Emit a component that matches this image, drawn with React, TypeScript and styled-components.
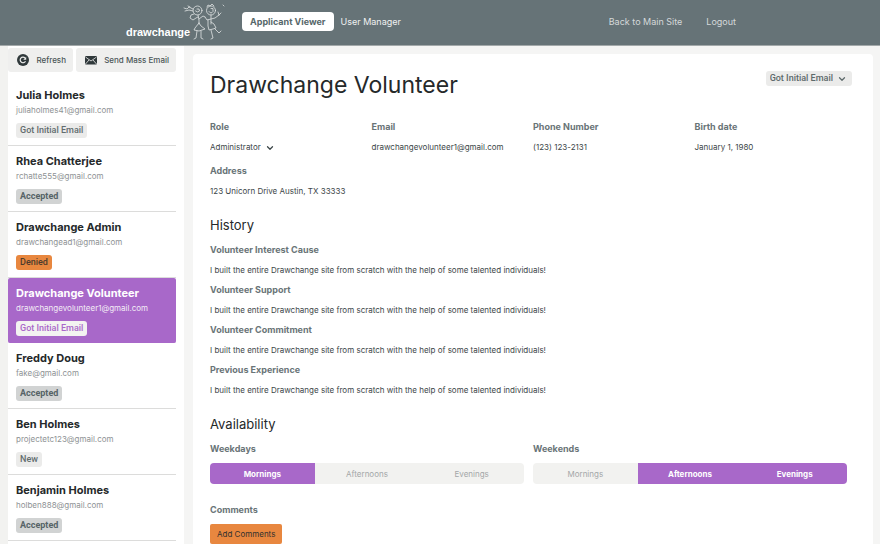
import React, { useState } from "react";
import styled, { createGlobalStyle } from "styled-components";
import { ChevronDown } from "lucide-react";

const color = {
  slate: "#667377",
  ink: "#25292a",
  text: "#3c4648",
  muted: "#8e9294",
  wash: "#f2f2f0",
  line: "#dcdcdb",
  purple: "#a868c9",
  orange: "#e8873f",
};

const tagFont = `Roboto, "Liberation Sans", sans-serif`;

const GlobalStyle = createGlobalStyle`
  * { box-sizing: border-box; }
  body {
    margin: 0;
    background: #f5f5f4;
    color: ${color.text};
    font: 8px/20px Inter, "Liberation Sans", sans-serif;
  }
  button, select { font: inherit; color: inherit; border: 0; margin: 0; cursor: pointer; }
  h1, h2, h3, p, ul, dl, dd { margin: 0; padding: 0; }
`;

const Page = styled.div`
  display: flex;
  flex-direction: column;
  height: 100vh;
`;

const Header = styled.header`
  flex: none;
  display: flex;
  align-items: center;
  height: 46px;
  padding: 0 144px 2px 126px;
  background: ${color.slate};
  border-bottom: 1px solid #a3a9aa;
  color: #fff;
  font-size: 9px;
`;

const Logo = styled.a`
  display: flex;
  align-items: flex-end;
  width: 100px;
  height: 38px;
  color: #fff;
  text-decoration: none;
  font: bold 11px/18px "Liberation Sans", sans-serif;
`;

const Figures = styled.svg`
  flex: none;
  width: 44px;
  height: 38px;
  margin-left: -7px;
  fill: none;
  stroke: #dfe3e3;
  stroke-width: 0.8;
  stroke-linecap: round;
  stroke-linejoin: round;
`;

const Tabs = styled.nav`
  display: flex;
  align-items: center;
  gap: 7px;
  margin-left: 16px;
`;

const Tab = styled.a<{ $active?: boolean }>`
  padding: 0 ${(p) => (p.$active ? 8 : 0)}px;
  border-radius: 4px;
  background: ${(p) => (p.$active ? "#fff" : "transparent")};
  color: ${(p) => (p.$active ? "#56676a" : "#f0f1f1")};
  font-weight: ${(p) => (p.$active ? 700 : 400)};
  line-height: 19px;
  text-decoration: none;
  white-space: nowrap;
`;

const SiteLinks = styled.nav`
  display: flex;
  gap: 24px;
  margin-left: auto;
`;

const SiteLink = styled.a`
  color: #d5d9da;
  text-decoration: none;
`;

const Body = styled.div`
  flex: 1;
  min-height: 0;
  display: flex;
`;

const Sidebar = styled.aside`
  flex: none;
  display: flex;
  flex-direction: column;
  width: 184px;
  padding: 2px 8px 0 0;
  border-left: 8px solid ${color.wash};
  background: #fff;
`;

const Actions = styled.div`
  display: flex;
  gap: 3px;
  padding-bottom: 8px;
`;

const ActionButton = styled.button<{ $grow?: boolean }>`
  flex: ${(p) => (p.$grow ? "1" : "none")};
  display: flex;
  align-items: center;
  justify-content: space-between;
  gap: 6px;
  width: ${(p) => (p.$grow ? "auto" : "65px")};
  height: 24px;
  padding: 0 7px 0 9px;
  border-radius: 3px;
  background: #efefee;
  color: #4b5557;
  font-weight: 500;
  white-space: nowrap;
`;

const ActionIcon = styled.svg`
  flex: none;
  width: 12px;
  height: 12px;
`;

const PeopleList = styled.ul`
  flex: 1;
  min-height: 0;
  display: flex;
  flex-direction: column;
  margin-bottom: 3px;
  list-style: none;
`;

const PersonItem = styled.li`
  flex: 1 0 auto;
  display: flex;
`;

const PersonButton = styled.button<{ $selected: boolean }>`
  flex: 1;
  display: flex;
  flex-direction: column;
  align-items: flex-start;
  padding: 7px 8px 6px;
  border-bottom: 1px solid ${(p) => (p.$selected ? color.purple : color.line)};
  border-radius: ${(p) => (p.$selected ? 2 : 0)}px;
  background: ${(p) => (p.$selected ? color.purple : "#fff")};
  color: ${(p) => (p.$selected ? "#f3ecf6" : color.muted)};
  line-height: 14px;
  text-align: left;
`;

const PersonName = styled.span<{ $selected: boolean }>`
  color: ${(p) => (p.$selected ? "#fff" : color.ink)};
  font-size: 11px;
  font-weight: 700;
  line-height: 16px;
`;

type Tone = "pale" | "grey" | "orange" | "light";

const tones: Record<Tone, string> = {
  pale: "#ebebea",
  grey: "#d1d3d3",
  orange: color.orange,
  light: "#f3f3f1",
};
const toneText: Record<Tone, string> = {
  pale: "#626d6f",
  grey: "#566467",
  orange: "#4d3b2c",
  light: "#a968c9",
};

const Badge = styled.span<{ $tone: Tone }>`
  margin-top: 6px;
  padding: 0 4px;
  border-radius: 3px;
  background: ${(p) => tones[p.$tone]};
  color: ${(p) => toneText[p.$tone]};
  font-family: ${tagFont};
  font-size: 9px;
  font-weight: ${(p) => (p.$tone === "grey" ? 700 : 500)};
  line-height: 15px;
`;

const Main = styled.main`
  flex: 1;
  min-width: 0;
  padding: 8px 7px 0 9px;
  overflow-y: auto;
  scrollbar-width: none;
`;

const Card = styled.article`
  min-height: 100%;
  padding: 17px 17px 16px;
  border-radius: 4px;
  background: #fff;
`;

const TitleRow = styled.div`
  display: flex;
  align-items: flex-start;
  justify-content: space-between;
  padding-right: 4px;
  margin-bottom: 18px;
`;

const Title = styled.h1`
  color: ${color.ink};
  font-size: 23px;
  font-weight: 400;
  line-height: 28px;
`;

const SelectBox = styled.span<{ $filled?: boolean }>`
  display: inline-grid;
  grid-template-columns: auto auto;
  align-items: center;
  border-radius: 3px;
  background: ${(p) => (p.$filled ? "#ebebea" : "transparent")};
  color: ${(p) => (p.$filled ? "#5d696b" : color.text)};
  font-family: ${(p) => (p.$filled ? tagFont : "inherit")};
  font-size: ${(p) => (p.$filled ? 9 : 8)}px;
  font-weight: ${(p) => (p.$filled ? 500 : 400)};
  line-height: 15px;
  vertical-align: middle;

  select {
    grid-area: 1 / 1 / 2 / 3;
    height: 15px;
    padding: 0 19px 0 ${(p) => (p.$filled ? 4 : 0)}px;
    appearance: none;
    background: transparent;
    field-sizing: content;
  }

  svg {
    grid-area: 1 / 2;
    justify-self: end;
    margin-right: 5px;
    pointer-events: none;
  }
`;

const Details = styled.dl`
  display: grid;
  grid-template-columns: repeat(4, 1fr);
  row-gap: 4px;
`;

const Field = styled.div<{ $wide?: boolean }>`
  grid-column: ${(p) => (p.$wide ? "1 / -1" : "auto")};
  min-width: 0;
`;

const Term = styled.dt`
  color: #697477;
  font-size: 9px;
  font-weight: 700;
`;

const SectionTitle = styled.h2`
  margin: 15px 0 5px;
  color: ${color.ink};
  font-size: 13px;
  font-weight: 400;
  line-height: 19px;
`;

const Slots = styled.div`
  display: grid;
  grid-template-columns: 1fr 1fr;
`;

const SlotGroup = styled.div`
  padding-right: 9px;
`;

const Label = styled.h3`
  color: #697477;
  font-size: 9px;
  font-weight: 700;
  line-height: 20px;
`;

const Segments = styled.div`
  display: grid;
  grid-template-columns: repeat(3, 1fr);
  height: 21px;
  margin-top: 4px;
  overflow: hidden;
  border-radius: 4px;
`;

const Segment = styled.button<{ $on: boolean }>`
  padding: 0;
  background: ${(p) => (p.$on ? color.purple : color.wash)};
  color: ${(p) => (p.$on ? "#fff" : "#a4a7a8")};
  font-weight: ${(p) => (p.$on ? 700 : 400)};
`;

const Comments = styled.section`
  padding-top: 16px;
`;

const AddButton = styled.button`
  height: 20px;
  margin-top: 4px;
  padding: 0 7px;
  border-radius: 2px;
  background: ${color.orange};
  color: #33312e;
`;

type Person = { name: string; email: string; status: string; tone: Tone };

const people: Person[] = [
  { name: "Julia Holmes", email: "juliaholmes41@gmail.com", status: "Got Initial Email", tone: "pale" },
  { name: "Rhea Chatterjee", email: "rchatte555@gmail.com", status: "Accepted", tone: "grey" },
  { name: "Drawchange Admin", email: "drawchangead1@gmail.com", status: "Denied", tone: "orange" },
  { name: "Drawchange Volunteer", email: "drawchangevolunteer1@gmail.com", status: "Got Initial Email", tone: "light" },
  { name: "Freddy Doug", email: "fake@gmail.com", status: "Accepted", tone: "grey" },
  { name: "Ben Holmes", email: "projectetc123@gmail.com", status: "New", tone: "pale" },
  { name: "Benjamin Holmes", email: "holben888@gmail.com", status: "Accepted", tone: "grey" },
];

const answer = "I built the entire Drawchange site from scratch with the help of some talented individuals!";
const questions = ["Volunteer Interest Cause", "Volunteer Support", "Volunteer Commitment", "Previous Experience"];
const times = ["Mornings", "Afternoons", "Evenings"];

function SlotPicker({ label, initial }: { label: string; initial: string[] }) {
  const [on, setOn] = useState(initial);
  const toggle = (t: string) => setOn(on.includes(t) ? on.filter((x) => x !== t) : [...on, t]);
  return (
    <SlotGroup>
      <Label id={label}>{label}</Label>
      <Segments role="group" aria-labelledby={label}>
        {times.map((t) => (
          <Segment key={t} type="button" $on={on.includes(t)} aria-pressed={on.includes(t)} onClick={() => toggle(t)}>
            {t}
          </Segment>
        ))}
      </Segments>
    </SlotGroup>
  );
}

function LogoFigures() {
  return (
    <Figures viewBox="0 0 44 38" aria-hidden="true">
      <circle cx="14.500" cy="7.500" r="4.500" />
      <path d="M12.500 8q2 2 4 0l-.5-2h-2M10 6 6 4 4 6 1 5M10 8 6 7 2 8M7 4 5 3" />
      <path d="M11 11l-3 1-1 3 3 2 3-2 2-1M15 12l1 5v4M16 16l4-3 2 1" />
      <path d="M16 20l-4 5-1 2 5 1 6-2-4-3-2-3M14 28l-1 7-2 1M18 28v7l2 1" />
      <circle cx="28" cy="7.500" r="4.500" />
      <path d="M26 8.500q2 3 4 0V5.500h-2M24 4l1-2 2 1 2-2 2 2M28 12v9M22 14l2 3 4-1 4-1 4-3M36 12l-1-3M36 12l2-2" />
      <path d="M25 17v6l1 4 4-1 3-1-2-4-3-2M28 27l2 8-2 1M32 26l4 4 2-2M40 2l1 1" />
    </Figures>
  );
}

export default function App() {
  const [selected, setSelected] = useState(3);
  return (
    <>
      <GlobalStyle />
      <Page>
        <Header>
          <Logo href="#" aria-label="drawchange">
            drawchange
            <LogoFigures />
          </Logo>
          <Tabs>
            <Tab href="#applicants" $active aria-current="page">Applicant Viewer</Tab>
            <Tab href="#users">User Manager</Tab>
          </Tabs>
          <SiteLinks>
            <SiteLink href="#main">Back to Main Site</SiteLink>
            <SiteLink href="#logout">Logout</SiteLink>
          </SiteLinks>
        </Header>
        <Body>
          <Sidebar>
            <Actions>
              <ActionButton type="button">
                <ActionIcon viewBox="0 0 12 12" aria-hidden="true">
                  <circle cx="6" cy="6" r="6" fill="#30393b" />
                  <path d="M8.500 7.200A2.800 2.800 0 1 1 8 4" fill="none" stroke="#efefee" strokeWidth="1.2" />
                  <path d="M9.200 2.800v3H6.300z" fill="#efefee" />
                </ActionIcon>
                Refresh
              </ActionButton>
              <ActionButton type="button" $grow>
                <ActionIcon viewBox="0 0 12 12" aria-hidden="true">
                  <rect y="2" width="12" height="8.5" rx="1" fill="#30393b" />
                  <path d="m.5 3 5.500 4 5.500-4M.5 10l3.500-4M11.500 10 8 6" fill="none" stroke="#efefee" strokeWidth=".8" />
                </ActionIcon>
                Send Mass Email
              </ActionButton>
            </Actions>
            <PeopleList>
              {people.map((p, i) => (
                <PersonItem key={p.email}>
                  <PersonButton type="button" $selected={i === selected} onClick={() => setSelected(i)}>
                    <PersonName $selected={i === selected}>{p.name}</PersonName>
                    <span>{p.email}</span>
                    <Badge $tone={p.tone}>{p.status}</Badge>
                  </PersonButton>
                </PersonItem>
              ))}
            </PeopleList>
          </Sidebar>
          <Main>
            <Card>
              <TitleRow>
                <Title>Drawchange Volunteer</Title>
                <SelectBox $filled>
                  <select aria-label="Application status" defaultValue="Got Initial Email">
                    <option>Got Initial Email</option>
                  </select>
                  <ChevronDown size={10} strokeWidth={3} aria-hidden="true" />
                </SelectBox>
              </TitleRow>
              <Details>
                <Field>
                  <Term><label htmlFor="role">Role</label></Term>
                  <dd>
                    <SelectBox>
                      <select id="role" defaultValue="Administrator">
                        <option>Administrator</option>
                      </select>
                      <ChevronDown size={10} strokeWidth={3} aria-hidden="true" />
                    </SelectBox>
                  </dd>
                </Field>
                <Field>
                  <Term>Email</Term>
                  <dd>drawchangevolunteer1@gmail.com</dd>
                </Field>
                <Field>
                  <Term>Phone Number</Term>
                  <dd>(123) 123-2131</dd>
                </Field>
                <Field>
                  <Term>Birth date</Term>
                  <dd>January 1, 1980</dd>
                </Field>
                <Field $wide>
                  <Term>Address</Term>
                  <dd>123 Unicorn Drive Austin, TX 33333</dd>
                </Field>
              </Details>
              <SectionTitle>History</SectionTitle>
              <dl>
                {questions.map((q) => (
                  <Field key={q}>
                    <Term>{q}</Term>
                    <dd>{answer}</dd>
                  </Field>
                ))}
              </dl>
              <SectionTitle>Availability</SectionTitle>
              <Slots>
                <SlotPicker label="Weekdays" initial={["Mornings"]} />
                <SlotPicker label="Weekends" initial={["Afternoons", "Evenings"]} />
              </Slots>
              <Comments>
                <Label>Comments</Label>
                <AddButton type="button">Add Comments</AddButton>
              </Comments>
            </Card>
          </Main>
        </Body>
      </Page>
    </>
  );
}
